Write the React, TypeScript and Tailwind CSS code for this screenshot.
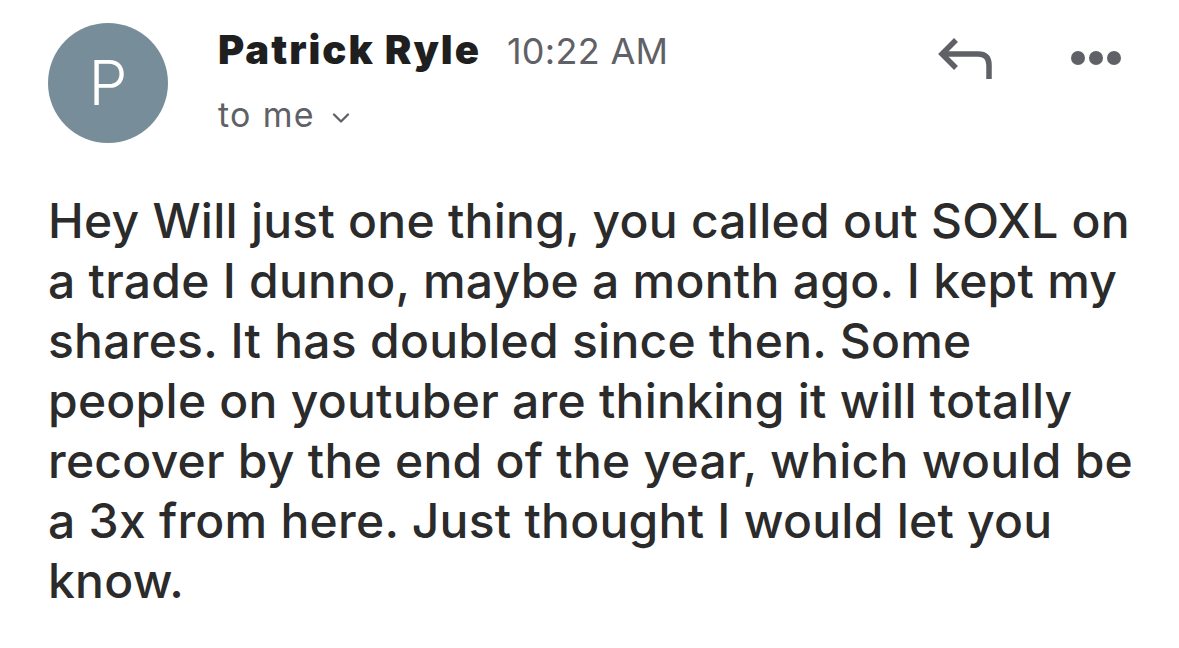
import { ChevronDown } from "lucide-react";

const lines = [
    "Hey Will just one thing, you called out SOXL on",
    "a trade I dunno, maybe a month ago. I kept my",
    "shares. It has doubled since then. Some",
    "people on youtuber are thinking it will totally",
    "recover by the end of the year, which would be",
    "a 3x from here. Just thought I would let you",
    "know.",
];

function ReplyIcon() {
    return (
        <svg width="55" height="42" viewBox="0 0 55 42" fill="none" stroke="#5f6166" strokeWidth="5.5" strokeLinejoin="miter">
            <path d="M18 3 L4 17 L18 31" strokeLinecap="butt" />
            <path d="M4 17 H40 Q51 17 51 28 V42" />
        </svg>
    );
}

export default function App() {
    return (
        <div className="w-full h-[648px] bg-white overflow-hidden" style={{ fontFamily: "Inter, 'Noto Sans', sans-serif" }}>
            {/* header */}
            <div className="flex items-start pl-[48px] pt-[23px] pr-[58px]">
                <div className="w-[120px] h-[120px] rounded-full bg-[#778d99] flex items-center justify-center shrink-0">
                    <span className="text-white text-[62px] font-light leading-none">P</span>
                </div>
                <div className="ml-[50px] flex flex-col">
                    <div className="flex items-baseline h-[54px] leading-[54px]">
                        <span className="text-[40px] font-black text-[#1f1f1f] tracking-[2px]">Patrick Ryle</span>
                        <span className="ml-[26px] text-[36px] text-[#5f6166] tracking-[0.3px]">10:22 AM</span>
                    </div>
                    <div className="flex items-center mt-[18px] text-[34px] leading-[40px] text-[#5f6166] tracking-[1.3px]">
                        <span>to me</span>
                        <ChevronDown size={28} strokeWidth={2} className="ml-[12px] mt-[6px]" />
                    </div>
                </div>
                <div className="ml-auto flex items-center gap-[78px] mt-[14px]">
                    <ReplyIcon />
                    <div className="flex gap-[4px]">
                        <span className="w-[14px] h-[14px] rounded-full bg-[#5f6166]" />
                        <span className="w-[14px] h-[14px] rounded-full bg-[#5f6166]" />
                        <span className="w-[14px] h-[14px] rounded-full bg-[#5f6166]" />
                    </div>
                </div>
            </div>
            {/* body */}
            <div className="pl-[48px] pt-[48px] text-[48px] leading-[60px] text-[#2b2b2b] font-medium tracking-[0.25px]">
                {lines.map((l) => (
                    <div key={l} className="whitespace-nowrap">{l}</div>
                ))}
            </div>
        </div>
    );
}
